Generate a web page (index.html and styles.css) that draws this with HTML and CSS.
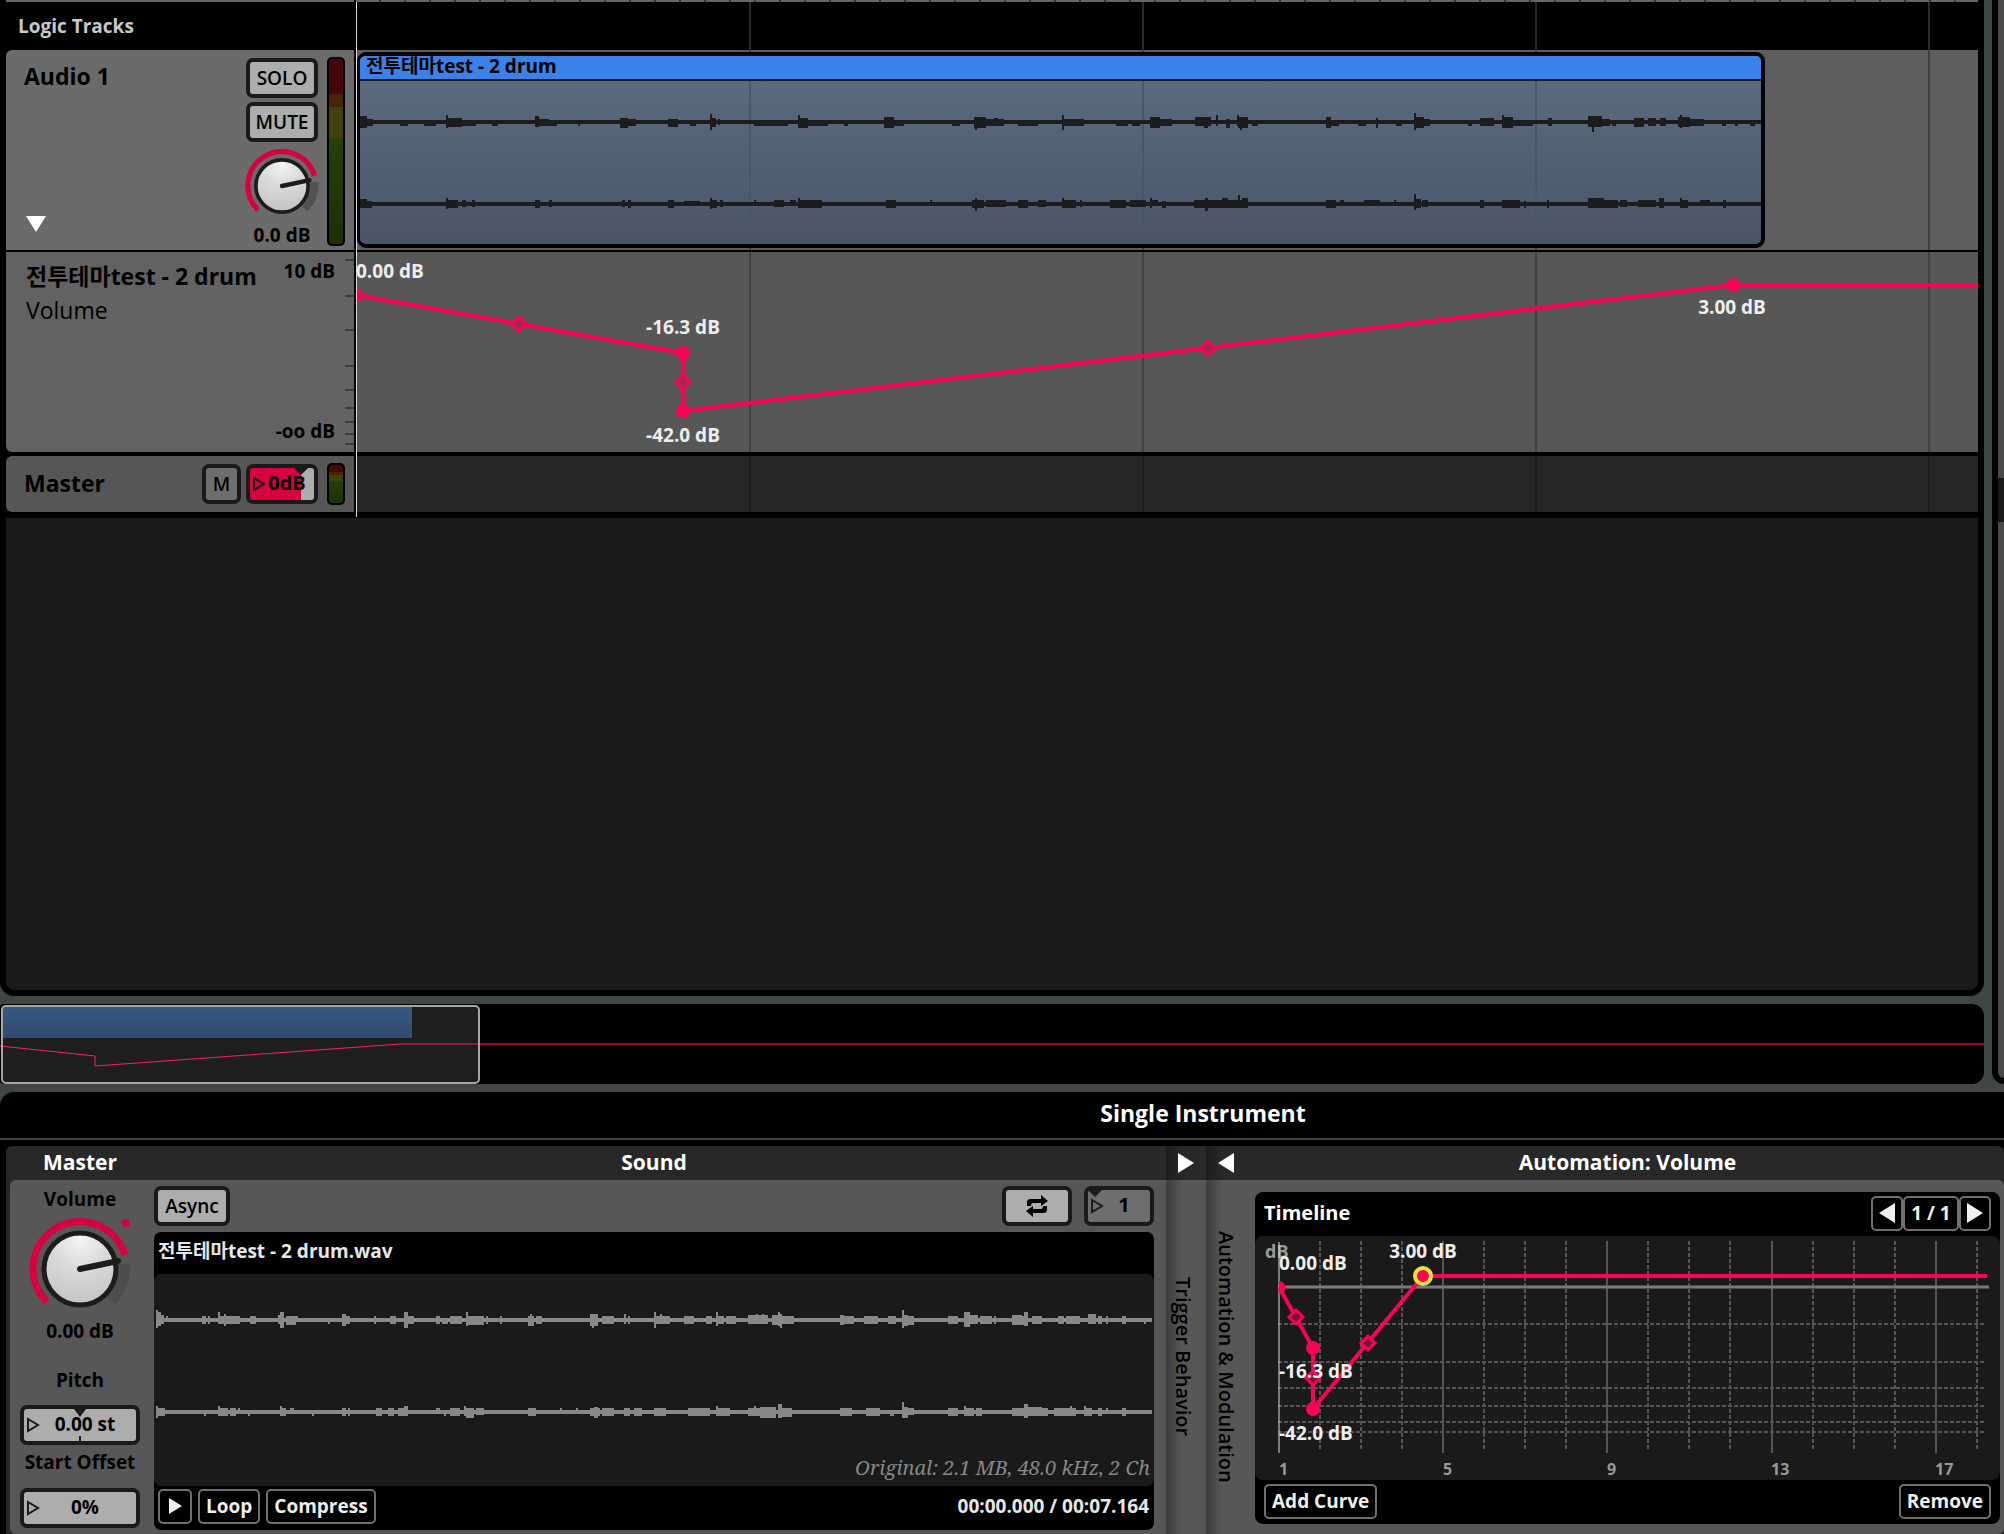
FILE: index.html
```html
<!DOCTYPE html>
<html lang="en">
<head>
<meta charset="utf-8">
<title>Event Editor</title>
<link rel="stylesheet" href="styles.css">
</head>
<body>
<svg class="defs" aria-hidden="true">
  <defs>
    <radialGradient id="knob" cx="50%" cy="10%" r="90%">
      <stop offset="0" stop-color="#f4f4f4"/><stop offset="0.4" stop-color="#dcdcdc"/><stop offset="1" stop-color="#c4c4c4"/>
    </radialGradient>
    <symbol id="dial" viewBox="-51 -51 102 102">
      <path d="M50 -5A50 50 0 0 1 35 35L25 25A36 36 0 0 0 36 -5Z" fill="#4a4a4a" opacity=".75"/>
      <path d="M-33 33A47 47 0 1 1 45 -14" fill="none" stroke="#d9003f" stroke-width="7"/>
      <circle r="36" fill="url(#knob)" stroke="#1c1c1c" stroke-width="5"/>
      <path d="M0 0L38 -8" stroke="#1c1c1c" stroke-width="6" stroke-linecap="round"/>
    </symbol>
    <symbol id="pointer" viewBox="0 0 14 18"><path d="M2 3L12 9L2 15Z" fill="none" stroke="#1c1c1c" stroke-width="2"/></symbol>
    <symbol id="next" viewBox="0 0 16 20"><path d="M0 0L16 10L0 20Z"/></symbol>
    <symbol id="prev" viewBox="0 0 16 20"><path d="M16 0L0 10L16 20Z"/></symbol>
  </defs>
</svg>
<div class="app">
  <main class="arrange">
    <section class="tracks">
      <div class="ruler"><div class="ruler-head"></div><div class="ruler-ticks"></div></div>
      <div class="row logic">
        <h2 class="logic-title">Logic Tracks</h2>
        <div class="lane grid-dark"></div>
      </div>
      <div class="row audio">
        <div class="head audio-head">
          <div class="audio-name">
            <h3>Audio 1</h3>
            <button class="fold" aria-label="Collapse"><svg width="20" height="16"><path d="M0 0H20L10 16Z" fill="#fff"/></svg></button>
          </div>
          <div class="audio-controls">
            <button class="key">SOLO</button>
            <button class="key">MUTE</button>
            <label class="dial dial-small"><svg><use href="#dial"/></svg><input type="range" aria-label="Track volume"></label>
            <output>0.0 dB</output>
          </div>
          <div class="meter"></div>
        </div>
        <div class="lane">
          <article class="clip">
            <h4>전투테마test - 2 drum</h4>
            <svg class="clip-wave"><path data-wave="clipLeft" data-y="41"/><path data-wave="clipRight" data-y="123"/></svg>
          </article>
        </div>
      </div>
      <div class="row automation">
        <div class="head automation-head">
          <div>
            <h3>전투테마test - 2 drum</h3>
            <p>Volume</p>
          </div>
          <div class="scale"><span>10 dB</span><span>-oo dB</span></div>
          <svg class="ticks"><path d="M0 8h9M0 44h9M0 78h9M0 114h9M0 138h9M0 156h9M0 170h9M0 182h9M0 192h9"/></svg>
        </div>
        <div class="lane">
          <svg class="curve">
            <path class="line" d="M0 43L327 101V159L1377 33H9000"/>
            <circle cx="0" cy="43" r="7"/><circle cx="327" cy="101" r="7"/><circle cx="327" cy="159" r="7"/><circle cx="1377" cy="33" r="7"/>
            <path class="diamond" d="M163 65l7 7-7 7-7-7zM327 123l7 7-7 7-7-7zM852 89l7 7-7 7-7-7z"/>
            <text x="0" y="26">0.00 dB</text>
            <text class="mid" x="327" y="82">-16.3 dB</text>
            <text class="mid" x="327" y="190">-42.0 dB</text>
            <text class="mid" x="1376" y="62">3.00 dB</text>
          </svg>
        </div>
      </div>
      <div class="row master">
        <div class="head master-head">
          <h3>Master</h3>
          <button class="key key-m">M</button>
          <label class="field gain"><svg class="pointer"><use href="#pointer"/></svg><input value="0dB" aria-label="Master gain"></label>
          <div class="meter"></div>
        </div>
        <div class="lane grid-dark"></div>
      </div>
      <div class="empty"></div>
      <div class="playhead"></div>
    </section>
    <section class="overview">
      <svg>
        <defs><linearGradient id="ov" x2="0" y2="1"><stop stop-color="#375782"/><stop offset="1" stop-color="#304b70"/></linearGradient></defs>
        <path d="M400 40H9000" stroke="#a80032" stroke-width="2"/>
        <rect x="2" y="2" width="477" height="77" rx="4" fill="#1e1e1e"/>
        <rect x="2" y="2" width="410" height="32" fill="url(#ov)"/>
        <path d="M0 42L95 52V62L401 40H478" fill="none" stroke="#f5215f"/>
        <rect x="2" y="2" width="477" height="77" rx="4" fill="none" stroke="#a6a6a6" stroke-width="2"/>
      </svg>
    </section>
  </main>
  <aside class="scroll"><div class="scroll-track"><div class="scroll-thumb"></div></div></aside>
  <section class="deck">
    <h1>Single Instrument</h1>
    <div class="panels">
      <section class="panel instrument">
        <header><h2 class="master-title">Master</h2><h2 class="sound-title">Sound</h2></header>
        <div class="instrument-body">
          <div class="master-column">
            <label for="volume">Volume</label>
            <div class="dial dial-large"><svg><use href="#dial"/></svg><svg class="led" width="10" height="10"><circle cx="5" cy="5" r="4" fill="#d9003f"/></svg><input id="volume" type="range"></div>
            <output class="volume-value">0.00 dB</output>
            <label for="pitch">Pitch</label>
            <div class="field pitch"><svg class="pointer"><use href="#pointer"/></svg><svg class="notch" width="12" height="32"><path d="M0 0H12L6 8Z" fill="#1c1c1c"/><path d="M6 27V32" stroke="#1c1c1c" stroke-width="2"/></svg><input id="pitch" value="0.00 st"></div>
            <label for="offset">Start Offset</label>
            <div class="field offset"><svg class="pointer"><use href="#pointer"/></svg><input id="offset" value="0%"></div>
          </div>
          <div class="sound-column">
            <div class="toolbar">
              <button class="key">Async</button>
              <button class="key loop-key" aria-label="Loop playback"><svg width="26" height="24"><path d="M3 12V8Q3 5 7 5H17V1L24 7L17 12V9H9Q7 9 7 12ZM23 12V16Q23 19 19 19H9V23L2 17L9 12V15H17Q19 15 19 12Z"/></svg></button>
              <label class="field count"><svg class="pointer"><use href="#pointer"/></svg><input value="1" aria-label="Play count"></label>
            </div>
            <div class="player">
              <h3>전투테마test - 2 drum.wav</h3>
              <div class="player-view">
                <svg><path data-wave="fileLeft" data-y="46"/><path data-wave="fileRight" data-y="138"/></svg>
                <p>Original: 2.1 MB, 48.0 kHz, 2 Ch</p>
              </div>
              <footer>
                <button class="flat play" aria-label="Play"><svg width="13" height="16" viewBox="0 0 16 20" preserveAspectRatio="none"><path d="M0 0L16 10L0 20Z"/></svg></button>
                <button class="flat">Loop</button>
                <button class="flat">Compress</button>
                <time>00:00.000 / 00:07.164</time>
              </footer>
            </div>
          </div>
        </div>
      </section>
      <section class="strip">
        <button aria-label="Expand"><svg width="16" height="20"><use href="#next"/></svg></button>
        <h2>Trigger Behavior</h2>
      </section>
      <section class="strip">
        <button aria-label="Collapse"><svg width="16" height="20"><use href="#prev"/></svg></button>
        <h2>Automation &amp; Modulation</h2>
      </section>
      <section class="panel modulation">
        <header><h2>Automation: Volume</h2></header>
        <div class="modulation-body">
          <div class="card">
            <div class="card-bar">
              <h3>Timeline</h3>
              <div class="pager">
                <button class="flat" aria-label="Previous"><svg width="16" height="20"><use href="#prev"/></svg></button>
                <span class="flat">1 / 1</span>
                <button class="flat" aria-label="Next"><svg width="16" height="20"><use href="#next"/></svg></button>
              </div>
            </div>
            <svg class="chart">
              <text class="unit" x="10" y="22">dB</text>
              <path class="solid" d="M188 5V217M352 5V217M517 5V217M681 5V217"/>
              <path class="dash" d="M65 5V213M106 5V213M147 5V213M229 5V213M270 5V213M311 5V213M393 5V213M434 5V213M475 5V213M558 5V213M599 5V213M640 5V213M722 5V213"/>
              <path class="dash" d="M23 88H729M23 126H729M23 152H729M23 170H729M23 186H729M23 196H729"/>
              <path class="zero" d="M23 51H734"/>
              <path class="axis" d="M24 6V217"/>
              <path class="line" d="M24 51L58 112V173L168 40H732"/>
              <path d="M24 45a6 6 0 0 1 0 13z"/><circle cx="58" cy="112" r="7"/><circle cx="58" cy="173" r="7"/>
              <path class="diamond" d="M41 74l7 7-7 7-7-7zM58 135l7 7-7 7-7-7zM113 100l7 7-7 7-7-7z"/>
              <circle class="chosen" cx="168" cy="40" r="8"/>
              <text x="24" y="34">0.00 dB</text>
              <text class="mid" x="168" y="22">3.00 dB</text>
              <text x="24" y="142">-16.3 dB</text>
              <text x="24" y="204">-42.0 dB</text>
              <text class="num" x="24" y="239">1</text><text class="num" x="188" y="239">5</text><text class="num" x="352" y="239">9</text><text class="num" x="516" y="239">13</text><text class="num" x="680" y="239">17</text>
            </svg>
            <div class="card-bar">
              <button class="flat">Add Curve</button>
              <button class="flat">Remove</button>
            </div>
          </div>
        </div>
      </section>
    </div>
  </section>
</div>
<script src="wave.js"></script>
</body>
</html>
```

FILE: styles.css
```css
* { box-sizing: border-box; }
body {
  margin: 0;
  background: #404545;
  color: #000;
  font-family: "Open Sans", "Noto Sans", "Noto Sans CJK KR", sans-serif;
  font-size: 20px;
  line-height: 24px;
  font-weight: 700;
}
h1, h2, h3, h4, p { margin: 0; font: inherit; white-space: nowrap; }
button, input { margin: 0; padding: 0; border: 0; background: none; color: inherit; font: inherit; }
svg { display: block; overflow: hidden; }
.defs { position: absolute; width: 0; height: 0; }

.app {
  display: grid;
  grid-template-columns: minmax(0, 1fr) 12px;
  grid-template-rows: 1fr auto;
  column-gap: 8px;
  row-gap: 8px;
  min-height: 100vh;
}
.arrange { display: flex; flex-direction: column; gap: 8px; }

/* Track list */
.tracks {
  position: relative;
  flex: 1;
  display: flex;
  flex-direction: column;
  padding: 0 6px 6px;
  background: #000;
  border-radius: 0 0 14px 14px;
}
.ruler, .row { display: grid; grid-template-columns: 348px minmax(0, 1fr); column-gap: 2px; }
.ruler { height: 2px; }
.ruler-head { background: #666; }
.ruler-ticks { background: repeating-linear-gradient(90deg, #666 0 23px, #333 23px 25px); }
.row { margin-bottom: 2px; }
.logic { height: 48px; margin: 0; }
.logic-title { padding: 12px 12px 0; color: #c8c8c8; font-size: 19px; }
.lane { position: relative; overflow: hidden; background: #5e5e5e; }
.lane::after {
  content: "";
  position: absolute;
  inset: 0 0 0 2px;
  background: repeating-linear-gradient(90deg, transparent 0 391px, #404040 391px 393px);
}
.grid-dark::after { background: repeating-linear-gradient(90deg, transparent 0 391px, #1c1c1c 391px 393px); }
.logic .lane { background: #000; }
.logic .lane::after { background: repeating-linear-gradient(90deg, transparent 0 391px, #2a2a2a 391px 393px); }
.head { display: flex; }
.head h3 { font-size: 23px; line-height: 28px; }
.audio { height: 200px; }
.audio-head { padding: 7px 9px 4px 18px; gap: 9px; background: #6b6b6b; border-radius: 6px 0 0 0; }
.audio-name { flex: 1; display: flex; flex-direction: column; justify-content: space-between; align-items: flex-start; padding: 5px 0 14px; }
.fold { height: 16px; margin-left: 2px; }
.audio-controls { display: flex; flex-direction: column; align-items: center; gap: 4px; width: 72px; padding-top: 1px; }
.audio-controls output { font-size: 19px; line-height: 16px; }
.key {
  height: 40px;
  padding: 0 4px;
  background: #adadad;
  border: 4px solid #1a1a1a;
  border-radius: 7px;
  font-size: 19px;
  line-height: 24px;
  font-weight: 600;
}
.audio-controls .key { width: 72px; flex: none; }
.dial { position: relative; display: block; flex: none; }
.dial > svg:first-child { width: 100%; height: 100%; }
.dial input { position: absolute; inset: 0; width: 100%; height: 100%; opacity: 0; }
.dial-small { width: 74px; height: 74px; margin: 3px 0 0; }
.meter {
  width: 18px;
  border: 2px solid #000;
  border-radius: 5px;
  background: linear-gradient(#470609 0 19%, #452608 19% 26%, #40410b 26% 43%, #24400a 43%, #1c3008 100%);
}
.clip {
  position: absolute;
  left: 1px;
  top: 2px;
  width: 1408px;
  height: 196px;
  border: 4px solid #000;
  border-left-width: 3px;
  border-radius: 9px;
  background: linear-gradient(#5e6d82, #4a5567);
  overflow: hidden;
  z-index: 1;
}
.clip h4 { height: 25px; padding-left: 6px; font-size: 19px; line-height: 20px; background: #3a82ea; border-bottom: 2px solid #1c1c1c; }
.clip-wave {
  width: 100%;
  height: 163px;
  fill: #1c1c1c;
  background: repeating-linear-gradient(90deg, transparent 0 389px, #46566b 389px 391px, transparent 391px 393px);
}

.automation { height: 200px; margin-bottom: 4px; }
.automation .lane { background: #575757; }
.automation-head { justify-content: space-between; gap: 10px; padding-left: 20px; background: #626262; border-radius: 0 0 0 6px; }
.automation-head > div:first-child { flex: 1; padding-top: 10px; }
.automation-head p { font-size: 23px; line-height: 40px; font-weight: 400; }
.scale { display: flex; flex-direction: column; justify-content: space-between; padding: 7px 0 9px; font-size: 19px; text-align: right; white-space: nowrap; }
.ticks { width: 9px; height: 200px; stroke: #3c3c3c; stroke-width: 2; }
.curve { position: relative; z-index: 1; width: 100%; height: 200px; fill: #ff0055; }
.line { fill: none; stroke: #ff0055; stroke-width: 4; }
.diamond { stroke: #ff0055; stroke-width: 3; fill: #9a2a50; }
.curve text, .chart text { fill: #eee; font-size: 19px; }
text.mid { text-anchor: middle; }

.master { height: 56px; margin-bottom: 6px; }
.master .lane { background: #262626; }
.master-head { align-items: center; gap: 5px; padding: 0 9px 0 18px; background: #565656; border-radius: 6px 0 0 6px; }
.master-head h3 { flex: 1; padding-bottom: 3px; }
.key-m { width: 39px; background: #6e6e6e; }
.master-head .meter { height: 42px; margin-left: 4px; }
.field {
  position: relative;
  display: block;
  width: 120px;
  height: 40px;
  background: #adadad;
  border: 4px solid #1a1a1a;
  border-radius: 7px;
}
.field input { display: block; width: 100%; height: 100%; padding: 0 0 3px 10px; text-align: center; }
.pointer { position: absolute; left: 2px; top: 7px; width: 14px; height: 18px; }
.gain { width: 72px; background: linear-gradient(90deg, #d9003f 0 51px, #adadad 51px); }
.gain::before, .count::before {
  content: "";
  position: absolute;
  left: 44px;
  top: 0;
  border: 7px solid transparent;
  border-top-color: #1a1a1a;
  border-bottom: 0;
}
.empty { flex: 1; background: #1a1a1a; border-radius: 0 0 8px 8px; }
.playhead { position: absolute; left: 356px; top: 2px; width: 1px; height: 515px; background: #ddd; z-index: 2; }

.overview { height: 80px; background: #000; border-radius: 4px 12px 12px 4px; overflow: hidden; }
.overview svg { width: 100%; height: 80px; }

.scroll { display: flex; padding: 0 0 6px 6px; background: #000; border-radius: 0 0 0 14px; }
.scroll-track { flex: 1; background: #4a4a4a; border-radius: 0 0 0 8px; }
.scroll-thumb { height: 44px; margin-top: 478px; background: #1a1a1a; }

/* Deck */
.deck { grid-column: 1 / -1; background: #000; border-radius: 14px 0 0 0; }
.deck h1 { padding: 7px 0 11px 402px; border-bottom: 2px solid #404545; color: #fff; font-size: 23px; line-height: 28px; text-align: center; }
.panels { display: grid; grid-template-columns: 1160px 40px 49px minmax(0, 1fr); margin: 6px 0 0 6px; height: 388px; }
.panel { background: #282828; }
.instrument { border-radius: 6px 0 0 0; }
.panel header { height: 34px; color: #fff; font-size: 21px; line-height: 33px; text-align: center; }
.instrument header { display: flex; }
.master-title { width: 148px; }
.sound-title { width: 1000px; }
.instrument-body { display: flex; height: 354px; margin-left: 4px; background: #575757; border-radius: 6px 0 0 6px; }
.master-column { display: flex; flex-direction: column; align-items: center; width: 140px; padding-top: 7px; font-size: 19px; }
.dial-large { width: 102px; height: 102px; margin-top: 7px; }
.led { position: absolute; right: 0; top: 0; }
.volume-value { margin: -1px 0 25px; }
.pitch { margin: 13px 0 5px; }
.offset { margin-top: 14px; }
.notch { position: absolute; left: 50px; top: 0; pointer-events: none; }
.sound-column { width: 1000px; margin-left: 4px; padding-top: 6px; }
.toolbar { display: flex; gap: 12px; }
.toolbar .key { width: 76px; }
.toolbar .loop-key { display: flex; align-items: center; justify-content: center; width: 70px; margin-left: auto; }
.count { width: 70px; background: #6e6e6e; }
.count::before { left: 0; }
.player { margin-top: 6px; background: #000; border-radius: 7px; color: #e6e6e6; font-size: 19px; }
.player h3 { height: 42px; padding-left: 4px; line-height: 38px; }
.player-view { position: relative; height: 212px; background: #1a1a1a; border-radius: 7px; }
.player-view svg { width: 100%; height: 180px; padding: 0 2px; fill: #888; }
.player-view p { padding-right: 4px; color: #888; font: italic 400 20px/28px "Noto Serif", "Liberation Serif", serif; text-align: right; }
.player footer { display: flex; align-items: center; gap: 6px; height: 44px; padding: 0 5px 4px 4px; }
.player time { margin-left: auto; }
.flat {
  display: inline-flex;
  align-items: center;
  justify-content: center;
  height: 35px;
  padding: 0 6px;
  border: 2px solid #707070;
  border-radius: 5px;
  color: #eee;
  font-size: 19px;
  fill: #f0f0f0;
  white-space: nowrap;
}
.play { width: 34px; }
.strip {
  display: flex;
  flex-direction: column;
  align-items: center;
  background: linear-gradient(90deg, rgba(0, 0, 0, .3), transparent 16px), linear-gradient(#282828 34px, #575757 34px);
}
.strip + .strip { align-items: flex-start; padding-left: 8px; }
.strip button { display: grid; place-items: center; height: 34px; padding: 0 4px; fill: #fff; }
.strip h2 { flex: 1; writing-mode: vertical-rl; text-align: center; font-size: 20px; font-weight: 600; margin-right: 6px; }
.modulation { border-radius: 0 6px 0 0; }
.modulation header { padding-right: 4px; }
.modulation-body { height: 354px; padding: 12px 4px 10px 0; background: #575757; border-radius: 0 6px 6px 0; }
.card { background: #000; border-radius: 8px; }
.card-bar { display: flex; justify-content: space-between; align-items: center; height: 44px; padding: 0 9px 2px; color: #fff; font-size: 20px; }
.pager { display: flex; }
.pager button { width: 32px; padding: 0; }
.pager span { width: 56px; }
.chart { width: 100%; height: 244px; background: #1a1a1a; border-radius: 8px; fill: #ff0055; }
.chart path { stroke-width: 2; }
.chart .solid { stroke: #555; }
.chart .dash { stroke: #555; stroke-dasharray: 4 2; }
.chart .zero { stroke: #7a7a7a; stroke-width: 3; }
.chart .axis { stroke: #ddd; stroke-width: 1; }
.chart .line { stroke-width: 4; }
.chart .diamond { fill: #7c1438; stroke-width: 3; }
.chart .chosen { stroke: #e6e33c; stroke-width: 4; }
.chart text.unit { fill: #999; font-size: 18px; }
.chart text.num { fill: #999; font-size: 16px; }
```

FILE: wave.js
```js
// Peaks of each channel: x, width, height above and below the centre line.
const peaks = {
  clipLeft: { length: 1401, peaks: "0,7,6,6 7,6,3,4 40,8,2,4 64,12,2,4 86,2,7,6 88,14,4,5 102,14,2,4 132,6,2,4 175,4,6,5 179,10,3,4 189,8,2,4 218,2,2,4 260,8,4,6 268,8,3,4 308,10,3,5 330,6,2,4 350,2,8,8 352,4,4,5 358,2,3,3 394,34,2,4 438,2,7,6 440,8,4,6 448,20,2,4 484,4,2,4 524,10,5,6 534,10,2,4 592,8,2,4 614,12,5,6 615,2,4,8 626,18,3,4 634,4,4,4 658,20,2,4 702,2,7,8 704,20,3,4 756,12,2,4 772,8,2,4 790,10,5,6 800,12,3,4 835,16,5,4 844,4,4,6 856,2,7,4 866,4,3,6 877,2,7,4 878,10,5,6 880,2,4,8 892,6,2,4 966,5,5,6 971,8,2,4 998,8,2,4 1016,2,4,6 1036,6,2,4 1054,2,9,8 1056,8,5,6 1064,6,3,4 1108,4,2,4 1120,14,4,4 1142,2,7,6 1143,10,5,6 1153,20,2,4 1188,4,4,4 1228,14,6,5 1232,2,6,10 1242,8,3,4 1252,4,2,4 1274,10,4,5 1288,8,4,4 1300,6,4,4 1318,12,5,5 1320,2,7,6 1330,14,3,4 1362,4,2,4 1375,3,2,4 1390,5,2,4" },
  clipRight: { length: 1401, peaks: "0,7,5,4 7,5,3,4 86,2,6,5 88,10,4,4 102,4,4,3 112,3,4,3 175,5,4,4 189,3,4,3 262,3,4,3 268,3,4,4 308,6,4,4 324,16,3,2 350,2,6,5 352,5,4,4 360,3,4,3 394,2,4,2 414,10,4,3 430,6,4,2 438,2,6,4 440,22,4,4 526,10,4,4 570,2,4,2 612,12,4,4 615,2,6,7 626,20,4,3 658,10,4,4 678,8,4,3 702,2,6,4 704,12,4,4 720,2,4,3 750,16,4,4 770,16,4,3 790,2,6,4 792,6,4,2 802,4,3,4 834,50,4,4 845,3,6,7 862,6,6,4 878,2,9,4 882,6,6,4 966,10,4,4 980,4,4,2 1004,14,4,2 1012,8,4,2 1034,2,4,2 1054,2,10,6 1056,5,5,4 1062,6,4,3 1120,4,4,4 1142,18,4,4 1164,2,3,4 1187,2,4,4 1228,16,6,4 1244,14,4,4 1260,7,4,3 1278,18,4,3 1299,5,6,4 1320,2,6,4 1322,6,4,4 1340,10,4,2 1363,3,4,4" },
  fileLeft: { length: 996, peaks: "0,2,10,8 2,3,8,6 5,3,5,4 10,2,4,2 46,4,4,4 52,2,4,4 62,2,8,4 64,20,4,4 68,2,6,6 94,6,4,4 122,6,5,4 124,4,8,8 130,10,4,5 140,2,4,2 172,2,2,4 186,4,6,6 190,4,4,4 218,2,4,4 234,6,4,4 248,4,8,8 252,6,4,4 280,4,4,4 286,6,2,4 294,12,4,4 310,2,8,6 312,16,4,5 330,2,4,4 344,2,4,4 372,6,4,6 374,2,6,4 380,6,4,4 434,8,6,6 436,2,5,8 446,12,4,4 468,2,6,4 472,2,4,4 498,2,8,8 500,14,4,4 504,2,6,4 528,10,4,4 550,6,4,4 560,2,8,6 562,6,4,4 570,10,4,4 592,20,5,4 600,2,6,4 606,2,6,4 616,8,5,5 622,2,8,6 624,2,6,8 626,12,4,4 684,4,5,5 688,10,4,4 708,14,4,4 732,8,4,4 746,2,10,8 748,4,5,6 752,6,4,5 792,10,4,4 808,6,8,7 814,8,5,4 824,12,4,4 828,4,4,4 838,2,4,4 856,10,5,5 860,12,4,5 868,4,8,6 876,10,4,4 902,6,4,4 910,14,4,4 932,8,6,4 942,4,4,4 950,2,4,4 966,4,4,4 988,2,2,4" },
  fileRight: { length: 996, peaks: "0,2,6,6 2,7,4,4 48,2,2,4 62,2,6,4 64,8,4,4 74,6,4,4 82,2,4,2 92,2,2,4 124,2,6,4 126,4,4,4 134,4,4,2 156,2,2,4 186,4,4,4 192,2,4,4 220,6,4,4 232,6,4,4 242,6,4,4 248,4,6,4 280,4,4,2 288,2,2,4 294,10,4,4 308,2,6,4 310,8,4,6 320,8,4,3 372,8,4,4 404,2,4,2 420,2,4,2 434,10,4,4 438,4,5,6 446,12,4,4 468,6,4,4 478,8,4,4 498,12,4,4 532,22,4,4 560,2,6,4 562,12,4,4 592,12,4,4 598,2,6,4 604,16,5,6 622,4,8,6 626,10,4,5 684,12,4,4 710,14,4,4 734,4,2,4 746,2,10,6 748,4,5,6 752,6,4,3 792,10,4,4 808,2,6,4 810,8,4,4 820,6,4,4 856,14,4,4 868,4,8,6 872,14,5,4 886,6,4,4 898,22,4,4 914,2,6,4 928,2,6,4 930,6,4,4 942,4,4,4 950,2,4,2 966,4,4,4" }
};

for (const path of document.querySelectorAll("[data-wave]")) {
  const { length, peaks: list } = peaks[path.dataset.wave];
  const y = Number(path.dataset.y);
  let d = `M0 ${y - 2}h${length}v4h${-length}z`;
  for (const peak of list.split(" ")) {
    const [x, width, up, down] = peak.split(",").map(Number);
    d += `M${x} ${y - up}h${width}v${up + down}h${-width}z`;
  }
  path.setAttribute("d", d);
}
```
